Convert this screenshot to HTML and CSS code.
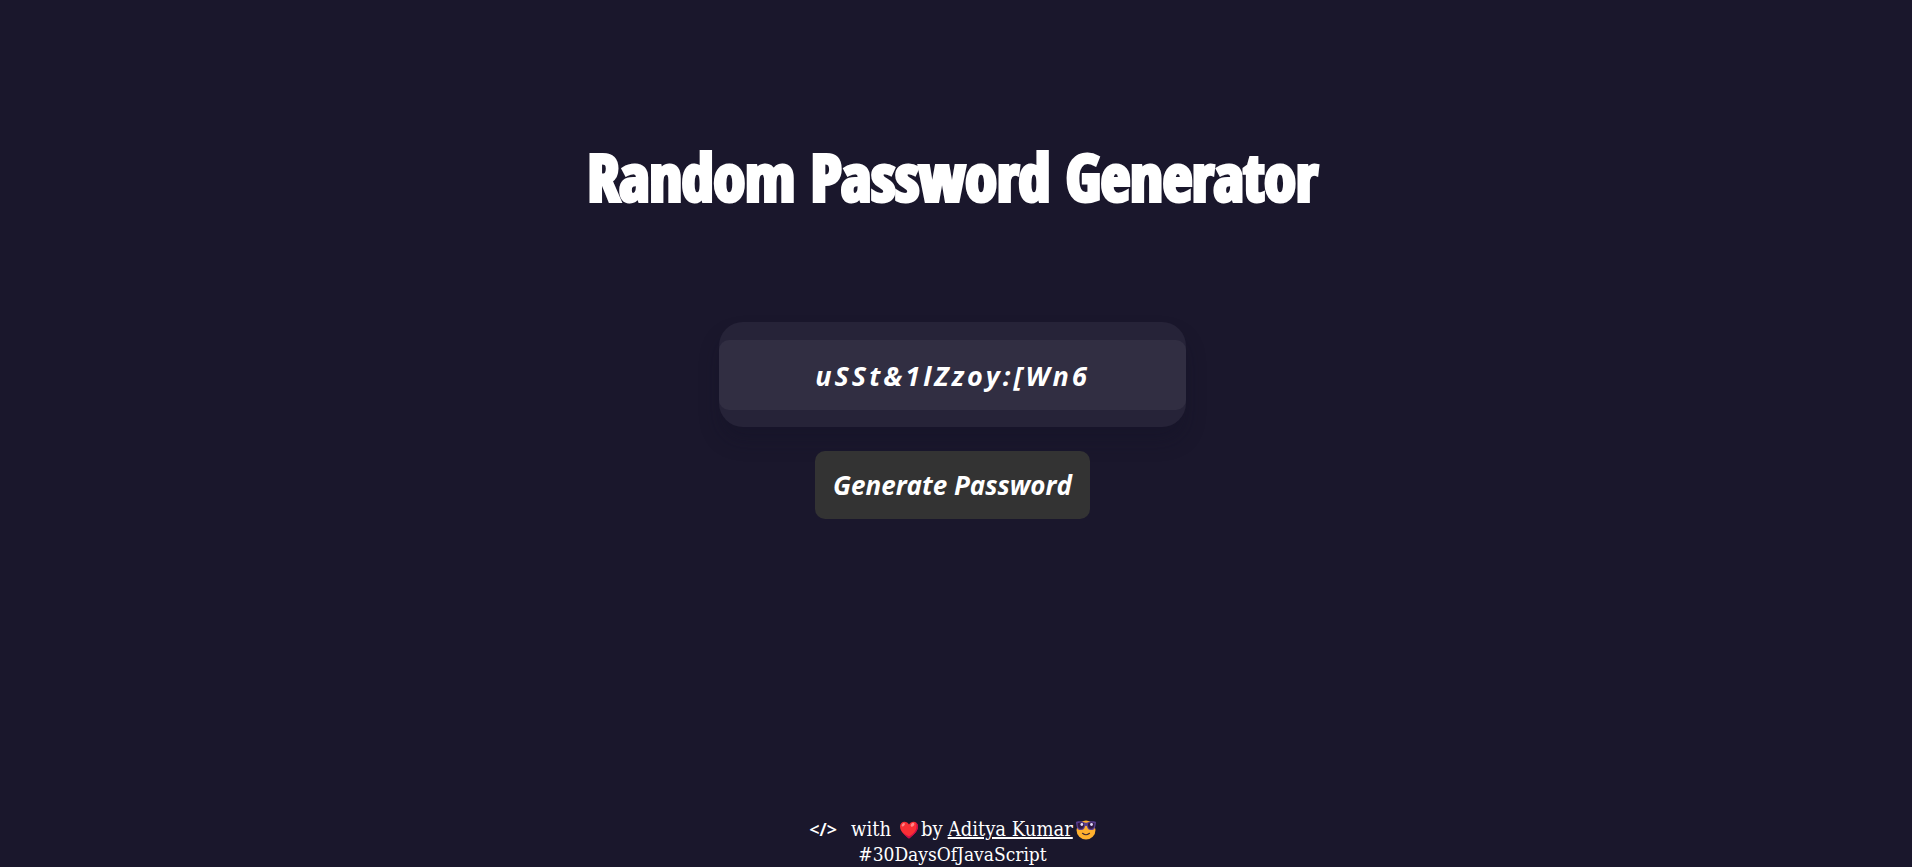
FILE: index.html
```html
<!DOCTYPE html>
<html lang="en">
<head>
<meta charset="utf-8">
<title>Random Password Generator</title>
<link rel="stylesheet" href="styles.css">
</head>
<body>
<main class="generator">
  <h1 class="title">Random Password Generator</h1>
  <div class="field">
    <input class="password" type="text" value="uSSt&amp;1lZzoy:[Wn6" aria-label="Generated password" readonly>
  </div>
  <button class="generate" type="button">Generate Password</button>
</main>
<footer class="footer">
  <p class="credit">
    <span class="code">&lt;/&gt;</span>
    <span class="with">with</span>
    <svg class="emoji heart" viewBox="0 0 20 20" role="img" aria-label="love">
      <path fill="#f92f35" d="M10 18.500C7.500 16.500 1 12 1 6.500C1 3.500 3.100 1.700 5.500 1.700C7.500 1.700 9.200 2.800 10 4.500C10.800 2.800 12.500 1.700 14.500 1.700C16.900 1.700 19 3.500 19 6.500C19 12 12.500 16.500 10 18.500Z"/>
      <path fill="#ca0b4a" d="M16.500 2.200C18 3 19 4.500 19 6.500C19 12 12.500 16.500 10 18.500C8.500 17.300 5.500 15.200 3.500 12.300C6 14.300 8.500 16 10 16.500C13 15 17.500 11.500 17.500 6.500C17.500 4.600 17.200 3.300 16.500 2.200Z"/>
      <ellipse cx="13.500" cy="4.800" rx="1.500" ry="2.200" fill="#ff8687" transform="rotate(40 13.500 4.800)"/>
      <ellipse cx="4.300" cy="4.800" rx="1.200" ry="2" fill="#ff8687" transform="rotate(40 4.300 4.800)"/>
    </svg>
    <span>by</span>
    <a class="author" href="#">Aditya Kumar</a>
    <svg class="emoji" viewBox="0 0 20 20" role="img" aria-label="cool">
      <circle cx="10" cy="10" r="9.500" fill="#ffb02e"/>
      <path d="M6.500 13.300Q10 16.200 13.500 13.300" fill="none" stroke="#402a32" stroke-width="1.200" stroke-linecap="round"/>
      <path fill="#5a3f91" d="M0 2.500Q0 1.500 1.200 1.500C4 1 7 1.300 8.500 2.500Q10 3 11.500 2.500C13 1.300 16 1 18.800 1.500Q20 1.500 20 2.500L19.300 6.500C18.800 9.500 16.800 10 14.800 10C12.300 10 11.400 8.500 11 6.200Q10 5.200 9 6.200C8.600 8.500 7.700 10 5.200 10C3.200 10 1.200 9.500 .7 6.500Z"/>
      <path fill="#321b41" d="M1.600 3.200Q5 1.900 8 3.500C8.300 6.500 7.500 8.800 5.200 8.800C2.300 8.800 1.700 6.800 1.600 3.200ZM12 3.500Q15 1.900 18.400 3.200C18.300 6.800 17.700 8.800 14.800 8.800C12.500 8.800 11.700 6.500 12 3.500Z"/>
      <circle cx="5.800" cy="4.500" r="1.400" fill="#e4dcff"/>
      <circle cx="15.500" cy="4.500" r="1.400" fill="#e4dcff"/>
    </svg>
  </p>
  <p class="tag">#30DaysOfJavaScript</p>
</footer>
</body>
</html>
```
FILE: styles.css
```css
* { box-sizing: border-box; }

body {
  min-height: 100vh;
  margin: 0;
  padding-right: 7px;
  display: flex;
  flex-direction: column;
  justify-content: space-between;
  background: #1a172c;
  color: #fff;
}

.generator {
  display: flex;
  flex-direction: column;
  align-items: center;
  padding-top: 122px;
}

.title {
  margin: 0 0 90px;
  font: bold 64px/110px "Open Sans Condensed", "Liberation Sans Narrow", "DejaVu Sans Condensed", sans-serif;
  -webkit-text-stroke: 4px #fff;
}

.field {
  width: 467px;
  max-width: 100%;
  padding: 18px 0 17px;
  border-radius: 24px;
  background: #262338;
  box-shadow: 0 14px 20px rgba(16, 14, 34, 0.25);
}

.password {
  display: block;
  width: 100%;
  height: 70px;
  padding: 0 12px;
  border: 0;
  border-radius: 10px;
  background: #312e42;
  color: inherit;
  font: italic 700 27px "Open Sans", "Noto Sans", sans-serif;
  letter-spacing: 3px;
  text-align: center;
}

.generate {
  margin-top: 24px;
  padding: 0 18px;
  border: 0;
  border-radius: 10px;
  background: #333;
  color: inherit;
  font: italic 700 26px/68px "Open Sans", "Noto Sans", sans-serif;
}

.footer {
  font: 19px/25px "DejaVu Serif Condensed", "DejaVu Serif", serif;
  text-align: center;
}

.credit,
.tag { margin: 0; }

.credit {
  display: flex;
  justify-content: center;
  align-items: center;
  font-size: 20px;
}

.code {
  margin-right: 14px;
  font: 600 18px/25px "Noto Sans", sans-serif;
}

.with { margin-right: 8px; }

.emoji {
  width: 20px;
  height: 20px;
  margin-left: 3px;
}

.heart { margin: 0 2px 0 0; }

.author {
  margin-left: 5px;
  color: inherit;
  text-decoration: underline;
}
```
